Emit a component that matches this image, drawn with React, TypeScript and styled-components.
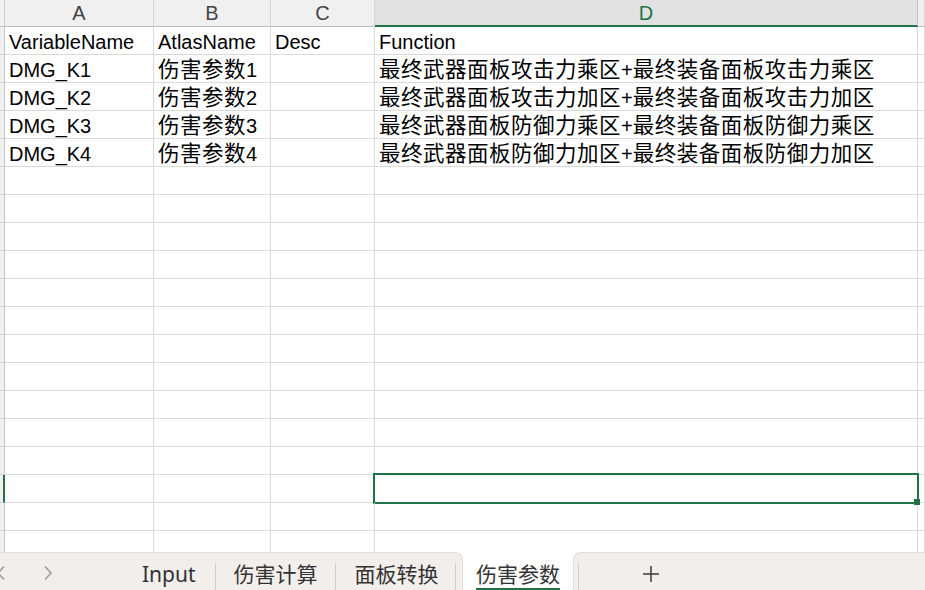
import * as React from 'react';
import styled, { createGlobalStyle } from 'styled-components';

const GlobalStyle = createGlobalStyle`
	html, body {
		margin: 0;
		padding: 0;
		background: #ffffff;
		overflow: hidden;
	}
`;

const green = '#217346';
const gridLine = '#dadada';

const Page = styled.div`
	width: 925px;
	height: 590px;
	display: flex;
	flex-direction: column;
	font-family: "Liberation Sans", "Noto Sans CJK SC", sans-serif;
	color: #000;
	overflow: hidden;
`;

const Sheet = styled.div`
	height: 552px;
	overflow: hidden;
	display: grid;
	grid-template-columns: 5px 149px 117px 104px 543px 1fr;
	grid-auto-rows: 28px;
	grid-template-rows: 27px;
`;

const CornerCell = styled.div`
	background: #f0f0f0;
	border-bottom: 1px solid #bdbdbd;
	border-right: 1px solid #d0d0d0;
`;

const ColHeader = styled.div<{ $active?: boolean }>`
	box-sizing: border-box;
	background: ${p => (p.$active ? '#e1e1e1' : '#f0f0f0')};
	border-right: 1px solid ${p => (p.$active ? '#c6c6c6' : '#d8d8d8')};
	border-bottom: ${p => (p.$active ? `2px solid ${green}` : '1px solid #bdbdbd')};
	color: ${p => (p.$active ? green : '#444')};
	font-size: 20px;
	line-height: 26px;
	text-align: center;
`;

const RowHeader = styled.div<{ $active?: boolean }>`
	box-sizing: border-box;
	background: #f0f0f0;
	border-bottom: 1px solid #d0d0d0;
	border-right: ${p => (p.$active ? `2px solid ${green}` : '1px solid #c4c4c4')};
`;

const Cell = styled.div<{ $selected?: boolean }>`
	position: relative;
	box-sizing: border-box;
	border-right: 1px solid ${gridLine};
	border-bottom: 1px solid ${gridLine};
	padding: 1px 0 0 4px;
	font-size: 20px;
	line-height: 28px;
	white-space: nowrap;

	${p =>
		p.$selected &&
		`
		&::after {
			content: '';
			position: absolute;
			left: -2px;
			top: -2px;
			right: -2px;
			bottom: -2px;
			border: 2px solid ${green};
			pointer-events: none;
		}
		&::before {
			content: '';
			position: absolute;
			right: -3px;
			bottom: -3px;
			width: 6px;
			height: 6px;
			background: ${green};
			z-index: 2;
		}
	`}
`;

// Chinese glyphs in the sheet are a touch larger than the Latin ones
const Han = styled.span`
	font-family: "Noto Sans CJK SC", sans-serif;
	font-size: 21.5px;
	letter-spacing: 0.5px;
	line-height: 20px;
`;

const TabBar = styled.div`
	height: 38px;
	display: flex;
	background: #ffffff;
	font-family: "Noto Sans", "Noto Sans CJK SC", sans-serif;
	font-size: 21px;
	color: #333;
`;

const TabStrip = styled.div`
	box-sizing: border-box;
	width: 463px;
	display: flex;
	align-items: flex-end;
	background: #f2eeec;
	border-top: 1px solid #e2dedc;
	border-right: 1px solid #e2dedc;
	border-top-right-radius: 8px;
`;

const AddStrip = styled.div`
	flex: 1;
	margin-left: 1px;
	display: flex;
	align-items: flex-end;
	background: #f2eeec;
	border-top: 1px solid #e2dedc;
	border-left: 1px solid #e2dedc;
	border-top-left-radius: 8px;
`;

const Nav = styled.div`
	width: 124px;
	height: 100%;
	display: flex;
	align-items: center;
	gap: 37px;
	margin-left: -4px;
	padding-top: 2px;
	box-sizing: border-box;
`;

const Tab = styled.div<{ $padL: number; $padR: number }>`
	height: 37px;
	box-sizing: border-box;
	padding: 7px ${p => p.$padR}px 0 ${p => p.$padL}px;
	line-height: 28px;
	white-space: nowrap;
`;

const Separator = styled.div<{ $gap?: number }>`
	width: 1px;
	height: 27px;
	margin-left: ${p => p.$gap || 0}px;
	background: #d3cfcd;
`;

const ActiveTab = styled.div`
	width: 109px;
	box-sizing: border-box;
	padding: 8px 0 0 13px;
	background: #ffffff;
	white-space: nowrap;
	color: #333;
`;

const ActiveLabel = styled.span`
	display: inline-block;
	height: 30px;
	line-height: 26px;
	box-sizing: border-box;
	border-bottom: 3px solid ${green};
`;

const AddButton = styled.div`
	height: 37px;
	display: flex;
	align-items: center;
	padding: 4px 0 0 63px;
	box-sizing: border-box;
`;

const Chevron: React.FC<{ dir: 'left' | 'right' }> = ({ dir }) => (
	<svg width="10" height="16" viewBox="0 0 10 16">
		<polyline
			points={dir === 'left' ? '8,1.5 2,8 8,14.5' : '2,1.5 8,8 2,14.5'}
			fill="none"
			stroke="#a4a4a4"
			strokeWidth="1.8"
		/>
	</svg>
);

const PlusIcon = () => (
	<svg width="18" height="18" viewBox="0 0 18 18">
		<line x1="9" y1="1" x2="9" y2="17" stroke="#444" strokeWidth="1.6" />
		<line x1="1" y1="9" x2="17" y2="9" stroke="#444" strokeWidth="1.6" />
	</svg>
);

const rows: string[][] = [
	['VariableName', 'AtlasName', 'Desc', 'Function'],
	['DMG_K1', '伤害参数1', '', '最终武器面板攻击力乘区+最终装备面板攻击力乘区'],
	['DMG_K2', '伤害参数2', '', '最终武器面板攻击力加区+最终装备面板攻击力加区'],
	['DMG_K3', '伤害参数3', '', '最终武器面板防御力乘区+最终装备面板防御力乘区'],
	['DMG_K4', '伤害参数4', '', '最终武器面板防御力加区+最终装备面板防御力加区'],
];

const ROW_COUNT = 19;
const SELECTED_ROW = 16;
const columns = ['A', 'B', 'C', 'D', ''];

const renderText = (v: string) =>
	v.split(/([\u4e00-\u9fff]+)/).map((part, k) =>
		/[\u4e00-\u9fff]/.test(part) ? <Han key={k}>{part}</Han> : part
	);

export default function App() {
	const bodyRows = Array.from({ length: ROW_COUNT }, (_, i) => rows[i] || ['', '', '', '']);

	return (
		<Page>
			<GlobalStyle />
			<Sheet>
				<CornerCell />
				{columns.map((c, i) => (
					<ColHeader key={i} $active={c === 'D'}>{c}</ColHeader>
				))}
				{bodyRows.map((r, i) => (
					<React.Fragment key={i}>
						<RowHeader $active={i === SELECTED_ROW} />
						{r.map((v, j) => (
							<Cell key={j} $selected={i === SELECTED_ROW && j === 3}>
								{renderText(v)}
							</Cell>
						))}
						<Cell />
					</React.Fragment>
				))}
			</Sheet>
			<TabBar>
				<TabStrip>
					<Nav>
						<Chevron dir="left" />
						<Chevron dir="right" />
					</Nav>
					<Tab $padL={22} $padR={19}>Input</Tab>
					<Separator />
					<Tab $padL={18} $padR={17}>伤害计算</Tab>
					<Separator />
					<Tab $padL={19} $padR={16}>面板转换</Tab>
					<Separator />
				</TabStrip>
				<ActiveTab>
					<ActiveLabel>伤害参数</ActiveLabel>
				</ActiveTab>
				<AddStrip>
					<Separator $gap={4} />
					<AddButton>
						<PlusIcon />
					</AddButton>
				</AddStrip>
			</TabBar>
		</Page>
	);
}
